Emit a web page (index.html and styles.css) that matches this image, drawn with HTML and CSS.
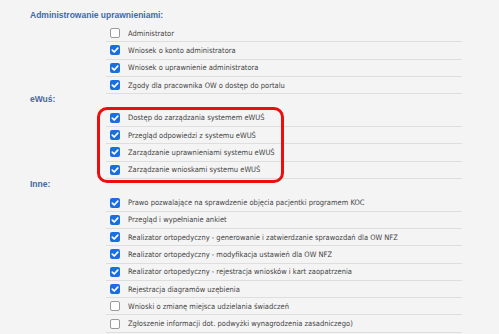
FILE: index.html
```html
<!DOCTYPE html>
<html lang="pl">
<head>
<meta charset="utf-8">
<link rel="stylesheet" href="styles.css">
</head>
<body>
<div class="page">
  <section class="group">
    <h3 class="group-title">Administrowanie uprawnieniami:</h3>
    <ul class="list">
      <li class="row"><span class="cb"></span><span class="label">Administrator</span></li>
      <li class="row"><span class="cb on"><svg viewBox="0 0 10 10"><path d="M2.3 5.1 L4.2 7 L7.8 3.2"/></svg></span><span class="label">Wniosek o konto administratora</span></li>
      <li class="row"><span class="cb on"><svg viewBox="0 0 10 10"><path d="M2.3 5.1 L4.2 7 L7.8 3.2"/></svg></span><span class="label">Wniosek o uprawnienie administratora</span></li>
      <li class="row"><span class="cb on"><svg viewBox="0 0 10 10"><path d="M2.3 5.1 L4.2 7 L7.8 3.2"/></svg></span><span class="label">Zgody dla pracownika OW o dostęp do portalu</span></li>
    </ul>
  </section>
  <section class="group">
    <h3 class="group-title">eWuś:</h3>
    <ul class="list highlighted">
      <li class="row"><span class="cb on"><svg viewBox="0 0 10 10"><path d="M2.3 5.1 L4.2 7 L7.8 3.2"/></svg></span><span class="label">Dostęp do zarządzania systemem eWUŚ</span></li>
      <li class="row"><span class="cb on"><svg viewBox="0 0 10 10"><path d="M2.3 5.1 L4.2 7 L7.8 3.2"/></svg></span><span class="label">Przegląd odpowiedzi z systemu eWUŚ</span></li>
      <li class="row"><span class="cb on"><svg viewBox="0 0 10 10"><path d="M2.3 5.1 L4.2 7 L7.8 3.2"/></svg></span><span class="label">Zarządzanie uprawnieniami systemu eWUŚ</span></li>
      <li class="row"><span class="cb on"><svg viewBox="0 0 10 10"><path d="M2.3 5.1 L4.2 7 L7.8 3.2"/></svg></span><span class="label">Zarządzanie wnioskami systemu eWUŚ</span></li>
      <li class="frame"></li>
    </ul>
  </section>
  <section class="group">
    <h3 class="group-title">Inne:</h3>
    <ul class="list">
      <li class="row"><span class="cb on"><svg viewBox="0 0 10 10"><path d="M2.3 5.1 L4.2 7 L7.8 3.2"/></svg></span><span class="label">Prawo pozwalające na sprawdzenie objęcia pacjentki programem KOC</span></li>
      <li class="row"><span class="cb on"><svg viewBox="0 0 10 10"><path d="M2.3 5.1 L4.2 7 L7.8 3.2"/></svg></span><span class="label">Przegląd i wypełnianie ankiet</span></li>
      <li class="row"><span class="cb on"><svg viewBox="0 0 10 10"><path d="M2.3 5.1 L4.2 7 L7.8 3.2"/></svg></span><span class="label">Realizator ortopedyczny - generowanie i zatwierdzanie sprawozdań dla OW NFZ</span></li>
      <li class="row"><span class="cb on"><svg viewBox="0 0 10 10"><path d="M2.3 5.1 L4.2 7 L7.8 3.2"/></svg></span><span class="label">Realizator ortopedyczny - modyfikacja ustawień dla OW NFZ</span></li>
      <li class="row"><span class="cb on"><svg viewBox="0 0 10 10"><path d="M2.3 5.1 L4.2 7 L7.8 3.2"/></svg></span><span class="label">Realizator ortopedyczny - rejestracja wniosków i kart zaopatrzenia</span></li>
      <li class="row"><span class="cb on"><svg viewBox="0 0 10 10"><path d="M2.3 5.1 L4.2 7 L7.8 3.2"/></svg></span><span class="label">Rejestracja diagramów uzębienia</span></li>
      <li class="row"><span class="cb"></span><span class="label">Wnioski o zmianę miejsca udzielania świadczeń</span></li>
      <li class="row"><span class="cb"></span><span class="label">Zgłoszenie informacji dot. podwyżki wynagrodzenia zasadniczego)</span></li>
    </ul>
  </section>
</div>
</body>
</html>
```
FILE: styles.css
```css
html, body {
  margin: 0;
  padding: 0;
  background: #f4f4f4;
}
body {
  font-family: "DejaVu Sans Condensed", "Liberation Sans", sans-serif;
  color: #444;
  overflow: hidden;
}
.page {
  padding-top: 9.5px;
}
.group-title {
  margin: 0;
  height: 15.5px;
  box-sizing: border-box;
  padding-left: 30px;
  font-family: "Liberation Sans", Arial, sans-serif;
  font-size: 8.5px;
  line-height: 11px;
  font-weight: bold;
  color: #3f6aa6;
}
.list {
  list-style: none;
  margin: 0 0 0 106px;
  padding: 0;
  width: 356px;
  position: relative;
}
.row {
  display: flex;
  align-items: center;
  height: 17.3px;
  box-sizing: border-box;
  padding-left: 4px;
  border-bottom: 1.5px solid #dedede;
  font-size: 7.5px;
  white-space: nowrap;
}
.cb {
  width: 10px;
  height: 10px;
  box-sizing: border-box;
  border: 1px solid #9a9a9a;
  border-radius: 2px;
  background: #fff;
  margin-right: 8px;
  flex: none;
  display: flex;
}
.cb.on {
  border: none;
  background: #1a6fe0;
}
.cb svg {
  width: 10px;
  height: 10px;
  fill: none;
  stroke: #fff;
  stroke-width: 1.7;
  stroke-linecap: round;
  stroke-linejoin: round;
}
.frame {
  position: absolute;
  left: -9px;
  top: -2.7px;
  width: 187px;
  height: 76px;
  box-sizing: border-box;
  border: 3px solid #ee0d0d;
  border-radius: 10px;
  pointer-events: none;
}
```
